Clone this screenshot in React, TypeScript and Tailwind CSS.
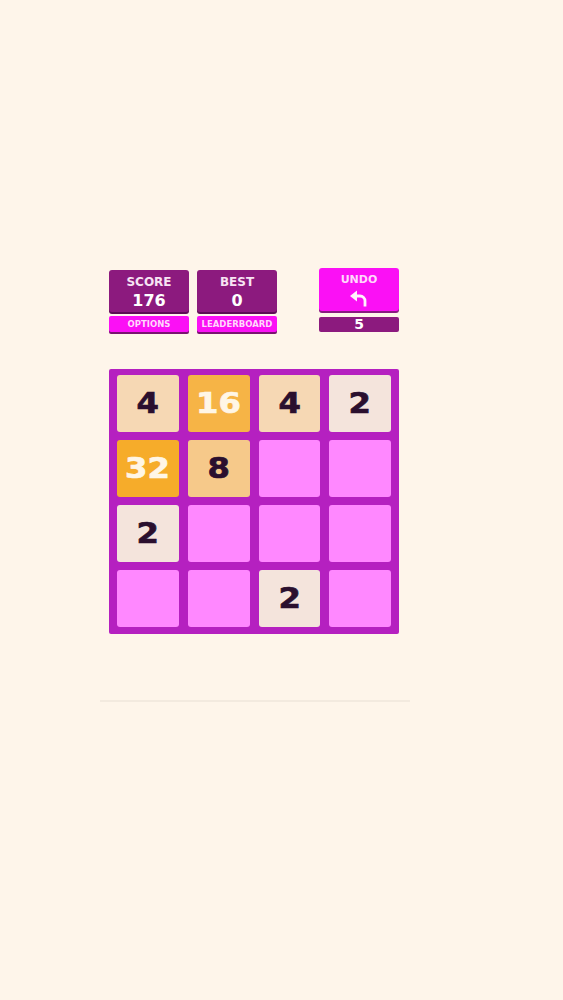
import React from "react";

const font = { fontFamily: '"DejaVu Sans", Verdana, sans-serif' };

const board: (number | null)[][] = [
  [4, 16, 4, 2],
  [32, 8, null, null],
  [2, null, null, null],
  [null, null, 2, null],
];

const tileClass: Record<number, string> = {
  2: "bg-[#f4e4dc] text-[#2a0f2e]",
  4: "bg-[#f6d8b4] text-[#2a0f2e]",
  8: "bg-[#f6c98a] text-[#2a0f2e]",
  16: "bg-[#f6b446] text-[#fff6e6]",
  32: "bg-[#f6ac2a] text-[#fff6e6]",
};

function StatBox({ label, value, button }: { label: string; value: string; button: string }) {
  return (
    <div className="flex w-[80px] flex-col">
      <div className="flex h-[42px] flex-col items-center justify-center gap-[2px] rounded-[3px] bg-[#8c1a7e] pt-[3px] shadow-[0_2px_0_#5e0d55]">
        <span className="text-[12px] font-bold leading-[14px] text-[#f7e3f3]">{label}</span>
        <span className="text-[16px] font-bold leading-[20px] text-white">{value}</span>
      </div>
      <div className="mt-[4px] flex h-[16px] items-center justify-center rounded-[2px] bg-[#fb10f5] shadow-[0_2px_0_#7a1270]">
        <span className="text-[8.5px] font-bold text-[#ffd8fb]">{button}</span>
      </div>
    </div>
  );
}

export default function App() {
  return (
    <div className="min-h-[1000px] w-full bg-[#fef5ea]" style={font}>
      <div className="ml-[109px] w-[290px] pt-[268px]">
        {/* header */}
        <div className="flex items-start justify-between">
          <div className="mt-[2px] flex gap-[8px]">
            <StatBox label="SCORE" value="176" button="OPTIONS" />
            <StatBox label="BEST" value="0" button="LEADERBOARD" />
          </div>
          <div className="flex w-[80px] flex-col">
            <div className="flex h-[43px] flex-col items-center rounded-[3px] bg-[#fb10f5] pt-[5px] shadow-[0_2px_0_#8a1a80]">
              <span className="text-[11px] font-bold leading-[13px] text-[#ffd8fb]">UNDO</span>
              <svg width="20" height="18" viewBox="0 0 20 18" className="mt-[4px]">
                <path d="M1 6 L8 0.5 L8 11.5 Z" fill="#fff3fb" />
                <path d="M7 6 H11 A5 5 0 0 1 16 11 V16.5" fill="none" stroke="#fff3fb" strokeWidth="2.8" />
              </svg>
            </div>
            <div className="mt-[6px] flex h-[15px] items-center justify-center rounded-[2px] bg-[#8c1a7e]">
              <span className="text-[14px] font-bold leading-[15px] text-white">5</span>
            </div>
          </div>
        </div>

        {/* board */}
        <div className="mt-[37px] grid grid-cols-4 gap-x-[9px] gap-y-[8px] rounded-[2px] bg-[#b520c0] px-[8px] pb-[7px] pt-[6px]">
          {board.flat().map((v, i) => (
            <div
              key={i}
              className={`flex h-[57px] items-center justify-center rounded-[3px] text-[28px] font-bold ${
                v ? tileClass[v] : "bg-[#ff88ff]"
              }`}
            >
              <span className="inline-block scale-x-[1.15] [-webkit-text-stroke:0.7px_currentColor]">{v ?? ""}</span>
            </div>
          ))}
        </div>
      </div>

      <div className="ml-[100px] mt-[66px] h-[2px] w-[310px] bg-[#f3eadf]" />
    </div>
  );
}
